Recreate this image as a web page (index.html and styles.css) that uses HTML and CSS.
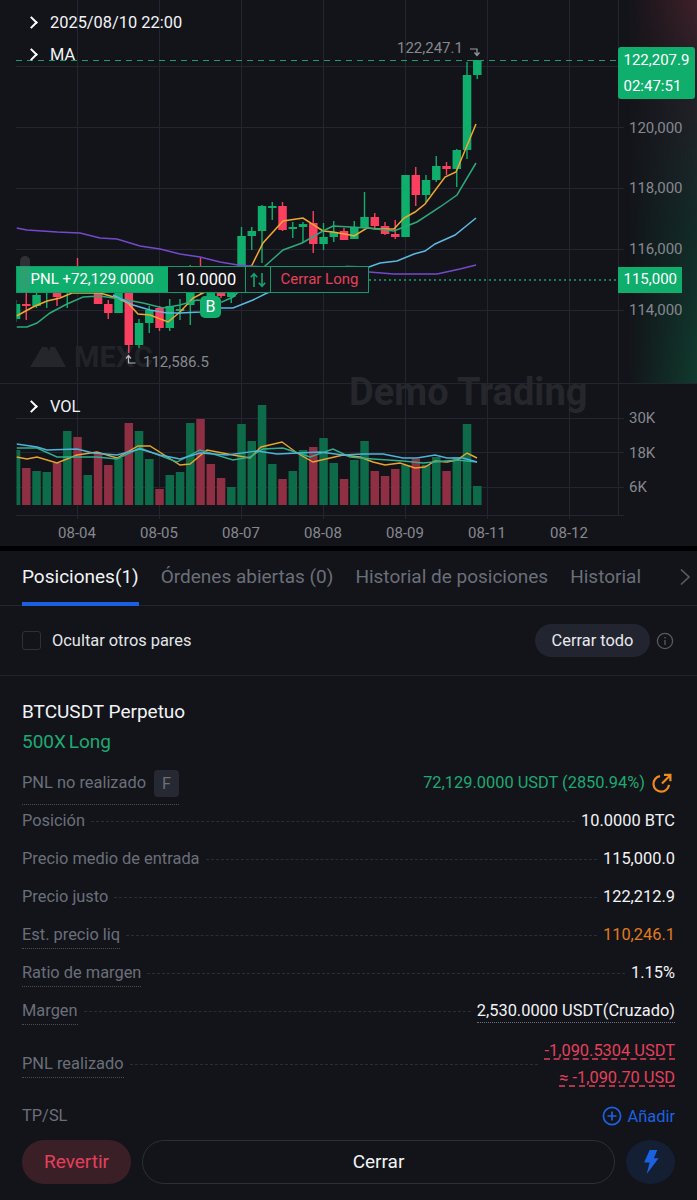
FILE: index.html
```html
<!DOCTYPE html>
<html lang="es">
<head>
    <meta charset="UTF-8">
    <meta name="viewport" content="width=device-width, initial-scale=1.0">
    <title>BTCUSDT Perpetuo</title>
    <link rel="stylesheet" href="styles.css">
</head>
<body>

    <div class="chart">
        <div class="glow"></div>
        <svg id="chartSvg" class="chart-svg" width="697" height="546" viewBox="0 0 697 546"></svg>

        <div class="legend legend-date"><span class="chev"></span>2025/08/10 22:00</div>
        <div class="legend legend-ma"><span class="chev"></span>MA</div>
        <div class="legend legend-vol"><span class="chev"></span>VOL</div>

        <div class="tag tag-last">
            <div>122,207.9</div>
            <div>02:47:51</div>
        </div>

        <div class="pnl-line">
            <div class="pnl-value">PNL +72,129.0000</div>
            <div class="pnl-qty">10.0000</div>
            <div class="pnl-flip">
                <svg width="18" height="18" viewBox="0 0 18 18" fill="none" stroke="#12a56c" stroke-width="1.6">
                    <path d="M5 16V3M1.800 6.200 5 2.600l3.200 3.600"/>
                    <path d="M13 2v13M9.800 11.800l3.200 3.600 3.200-3.600"/>
                </svg>
            </div>
            <div class="pnl-close">Cerrar Long</div>
        </div>
        <div class="handle"></div>
        <div class="tag tag-entry">115,000</div>

        <div class="marker">B</div>
    </div>

    <div class="gap"></div>

    <div class="panel">
        <div class="tabs">
            <div class="tab active">Posiciones(1)</div>
            <div class="tab">Órdenes abiertas (0)</div>
            <div class="tab">Historial de posiciones</div>
            <div class="tab">Historial</div>
            <svg class="tabs-more" width="12" height="18" viewBox="0 0 12 18" fill="none" stroke="#5a5e67" stroke-width="1.6">
                <path d="M2 1.500 10 9l-8 7.500"/>
            </svg>
        </div>

        <div class="filters">
            <div class="checkbox"></div>
            <div class="filter-label">Ocultar otros pares</div>
            <div class="close-all">Cerrar todo</div>
            <svg class="info" width="18" height="18" viewBox="0 0 18 18" fill="none" stroke="#565a63" stroke-width="1.3">
                <circle cx="9" cy="9" r="7.600"/>
                <path d="M9 8v5M9 5v1.600"/>
            </svg>
        </div>

        <div class="position">
            <div class="pos-title">BTCUSDT Perpetuo</div>
            <div class="pos-side">500X Long</div>

            <div class="row">
                <div class="label dotted label-pnl">PNL no realizado <span class="badge">F</span></div>
                <div class="spacer"></div>
                <div class="value green">72,129.0000 USDT (2850.94%)</div>
                <svg class="share" width="22" height="22" viewBox="0 0 22 22" fill="none" stroke="#f08a1d" stroke-width="2.2">
                    <path d="M9 4.200a7.800 7.800 0 1 0 9 8.600"/>
                    <path d="M11 11.500 19 3.500M13 2.800h6.400v6.400"/>
                </svg>
            </div>
            <div class="row">
                <div class="label">Posición</div>
                <div class="leader"></div>
                <div class="value">10.0000 BTC</div>
            </div>
            <div class="row">
                <div class="label">Precio medio de entrada</div>
                <div class="leader"></div>
                <div class="value">115,000.0</div>
            </div>
            <div class="row">
                <div class="label">Precio justo</div>
                <div class="leader"></div>
                <div class="value">122,212.9</div>
            </div>
            <div class="row">
                <div class="label dotted">Est. precio liq</div>
                <div class="leader"></div>
                <div class="value orange">110,246.1</div>
            </div>
            <div class="row">
                <div class="label dotted">Ratio de margen</div>
                <div class="leader"></div>
                <div class="value">1.15%</div>
            </div>
            <div class="row">
                <div class="label dotted">Margen</div>
                <div class="leader"></div>
                <div class="value value-dotted">2,530.0000 USDT(Cruzado)</div>
            </div>
            <div class="row row-tall">
                <div class="label dotted">PNL realizado</div>
                <div class="leader"></div>
                <div class="value-stack">
                    <div class="red-link">-1,090.5304 USDT</div>
                    <div class="red-link">≈ -1,090.70 USD</div>
                </div>
            </div>
            <div class="row row-tp">
                <div class="label">TP/SL</div>
                <div class="spacer"></div>
                <svg width="20" height="20" viewBox="0 0 20 20" fill="none" stroke="#1c62e0" stroke-width="1.7">
                    <circle cx="10" cy="10" r="8.600"/>
                    <path d="M10 5.500v9M5.500 10h9"/>
                </svg>
                <div class="add">Añadir</div>
            </div>
        </div>

        <div class="actions">
            <div class="btn-revert">Revertir</div>
            <div class="btn-close">Cerrar</div>
            <div class="btn-flash">
                <svg width="17" height="26" viewBox="0 0 20 30" fill="#1c62e0">
                    <path d="M9 1h9l-4 9.500h5.500L5.500 29 9 15.500H2.500z"/>
                </svg>
            </div>
        </div>
    </div>

    <script src="script.js"></script>
</body>
</html>
```

FILE: styles.css
```css
* {
    box-sizing: border-box;
}

body {
    margin: 0;
    width: 697px;
    height: 1200px;
    overflow: hidden;
    background-color: #000;
    color: #f2f3f5;
    font-family: Roboto, "Liberation Sans", sans-serif;
    font-size: 16.400px;
}

/* chart */
.chart {
    position: relative;
    height: 546px;
    background-color: #131419;
    overflow: hidden;
}
.chart-svg {
    position: absolute;
    left: 0;
    top: 0;
}
.chart-svg text {
    font-family: Roboto, "Liberation Sans", sans-serif;
}
.glow {
    position: absolute;
    right: 0;
    top: 0;
    width: 70px;
    height: 383px;
    background: linear-gradient(180deg, #3f2029 0%, #241f27 22%, #122c28 60%, #103b2e 100%);
    -webkit-mask-image: linear-gradient(90deg, transparent, #000);
    mask-image: linear-gradient(90deg, transparent, #000);
}
.legend {
    position: absolute;
    left: 28px;
    display: flex;
    align-items: center;
    height: 22px;
    color: #f2f3f5;
    font-size: 16.400px;
}
.legend-date { top: 11px; }
.legend-ma { top: 43px; }
.legend-vol { top: 395px; }
.chev {
    width: 9px;
    height: 9px;
    margin-left: -1px;
    margin-right: 14px;
    border-top: 2px solid #fff;
    border-right: 2px solid #fff;
    transform: rotate(45deg);
}
.tag {
    position: absolute;
    left: 618px;
    background-color: #0fae6c;
    color: #fff;
    padding-left: 5.500px;
    font-size: 15px;
}
.tag-last {
    top: 47px;
    width: 77px;
    height: 52px;
    border-radius: 3px;
    line-height: 26px;
}
.tag-entry {
    top: 267px;
    width: 64px;
    height: 26px;
    line-height: 25px;
}
.pnl-line {
    position: absolute;
    left: 16px;
    top: 266px;
    width: 353px;
    height: 27px;
    display: flex;
    border: 1px solid #0f9b66;
    background-color: #131419;
    font-size: 15px;
    line-height: 25px;
}
.pnl-value {
    width: 151px;
    padding-left: 13.500px;
    background-color: #0fae6c;
    color: #fff;
}
.pnl-qty {
    width: 77px;
    text-align: center;
    font-size: 16.400px;
    color: #fff;
}
.pnl-flip {
    width: 26px;
    display: flex;
    align-items: center;
    justify-content: center;
    border-left: 1px solid #0f9b66;
    border-right: 1px solid #0f9b66;
}
.pnl-close {
    flex: 1;
    text-align: center;
    color: #e5405a;
}
.handle {
    position: absolute;
    left: 20px;
    top: 256px;
    width: 10px;
    height: 36px;
    border-radius: 5px;
    background-color: rgba(120, 130, 130, 0.28);
}
.marker {
    position: absolute;
    left: 200px;
    top: 296px;
    width: 21px;
    height: 22px;
    border-radius: 5px;
    background-color: #0fae6c;
    color: #fff;
    text-align: center;
    line-height: 22px;
    font-size: 16px;
}

.gap {
    height: 5px;
}

/* bottom panel */
.panel {
    height: 649px;
    background-color: #12141a;
}
.tabs {
    display: flex;
    align-items: flex-start;
    gap: 22px;
    height: 55px;
    padding: 12px 0 0 22px;
    border-bottom: 1px solid #23262f;
    position: relative;
}
.tab {
    height: 43px;
    padding-top: 1px;
    line-height: 26px;
    font-size: 19px;
    color: #6b6f78;
    white-space: nowrap;
}
.tab.active {
    color: #f2f3f5;
    border-bottom: 4px solid #1c5fe0;
}
.tabs-more {
    position: absolute;
    right: 6px;
    top: 17px;
}
.filters {
    display: flex;
    align-items: center;
    height: 70px;
    padding: 0 23px 0 22px;
    border-bottom: 1px solid #20232b;
}
.checkbox {
    width: 19px;
    height: 19px;
    border: 1px solid #2e313a;
    border-radius: 3px;
    margin-right: 11px;
}
.filter-label {
    flex: 1;
    color: #e4e5e8;
}
.close-all {
    width: 115px;
    height: 33px;
    border-radius: 17px;
    background-color: #22252f;
    color: #e8e9ec;
    text-align: center;
    line-height: 33px;
    margin-right: 6px;
}
.position {
    padding: 21px 22px 0;
}
.pos-title {
    height: 30px;
    line-height: 30px;
    font-size: 19px;
}
.pos-side {
    height: 30px;
    line-height: 30px;
    font-size: 19px;
    word-spacing: -2px;
    color: #1fa971;
    margin-bottom: 7px;
}
.row {
    display: flex;
    align-items: center;
    height: 38px;
    white-space: nowrap;
}
.row-tall {
    height: 54px;
    margin-top: 7px;
}
.row-tp {
    margin-top: 6px;
    gap: 7px;
}
.label {
    color: #6b6f78;
    line-height: 22px;
}
.dotted {
    padding-bottom: 2px;
    border-bottom: 1px dotted #4a4d55;
    margin-top: 3px;
}
.label-pnl {
    display: flex;
    align-items: center;
    gap: 8px;
    padding-bottom: 7px;
    margin-top: 8px;
}
.badge {
    width: 25px;
    height: 27px;
    border-radius: 4px;
    background-color: #262932;
    text-align: center;
    line-height: 27px;
    color: #6b6f78;
}
.leader {
    flex: 1;
    margin: 0 6px;
    border-top: 1px dashed #2a2d35;
}
.spacer {
    flex: 1;
}
.value {
    color: #f2f3f5;
    line-height: 22px;
}
.value-dotted {
    border-bottom: 1px dotted #6b6f78;
}
.green {
    color: #1fa971;
}
.orange {
    color: #e07b1f;
}
.share {
    margin-left: 6px;
    margin-right: 2px;
}
.value-stack {
    text-align: right;
}
.red-link {
    height: 27px;
    line-height: 27px;
    color: #e5405a;
    text-decoration: underline dashed;
    text-underline-offset: 3px;
}
.add {
    color: #1c62e0;
    margin-left: -1px;
}
.actions {
    display: flex;
    gap: 11px;
    height: 44px;
    margin-top: 5px;
    padding: 0 22px;
}
.btn-revert {
    width: 109px;
    border-radius: 22px;
    background-color: #3a1f27;
    color: #e5405a;
    text-align: center;
    line-height: 44px;
    font-size: 19px;
}
.btn-close {
    flex: 1;
    border: 1px solid #2c2f38;
    border-radius: 22px;
    text-align: center;
    line-height: 42px;
    font-size: 19px;
}
.btn-flash {
    width: 49px;
    border-radius: 50%;
    background-color: #141f33;
    display: flex;
    align-items: center;
    justify-content: center;
}
```

FILE: script.js
```js
const GREEN = '#0fae6c';
const RED = '#fb3f60';
const GRID = '#23262e';
const AXIS = '#85888f';

const barX = i => 16 + 10.25 * i;

// bodyTop, bodyBottom, wickTop, wickBottom, up
const candles = [
    [304, 319, 300, 322, 1], [304, 306, 293, 320, 0], [295, 306, 290, 308, 1], [285, 293, 280, 308, 1],
    [285, 297, 280, 306, 0], [280, 292, 275, 308, 1], [270, 285, 258, 290, 0], [276, 286, 270, 290, 1],
    [285, 304, 278, 304, 0], [304, 313, 300, 319, 0], [288, 313, 282, 313, 1], [288, 345, 285, 353, 0],
    [323, 345, 319, 348, 1], [310, 323, 306, 333, 1], [308, 328, 306, 331, 0], [306, 328, 299, 331, 1],
    [309, 311, 299, 320, 1], [270, 305, 265, 325, 1], [268, 290, 258, 294, 0], [285, 298, 280, 302, 1],
    [278, 296, 274, 298, 0], [275, 297, 270, 303, 1], [236, 285, 227, 290, 1], [231, 236, 227, 250, 1],
    [206, 231, 205, 263, 1], [206, 208, 202, 220, 1], [206, 230, 202, 231, 0], [227, 229, 222, 238, 1],
    [224, 227, 222, 242, 1], [223, 244, 211, 253, 0], [237, 244, 223, 250, 1], [232, 237, 221, 242, 1],
    [231, 240, 228, 240, 0], [227, 239, 221, 239, 1], [217, 228, 192, 228, 1], [217, 226, 213, 230, 0],
    [226, 234, 222, 235, 0], [234, 237, 220, 239, 0], [175, 237, 175, 237, 1], [175, 195, 167, 206, 0],
    [180, 195, 175, 202, 1], [166, 180, 156, 182, 1], [166, 169, 162, 175, 0], [150, 169, 149, 187, 1],
    [75, 150, 62, 159, 1], [60, 75, 60, 79, 1]
];

// height, up
const volumes = [
    [55, 1], [37, 0], [34, 1], [33, 1], [42, 0], [74, 1], [68, 0], [30, 1], [52, 0], [40, 0], [47, 1], [82, 0],
    [74, 1], [46, 1], [16, 0], [30, 1], [33, 1], [82, 1], [86, 0], [41, 0], [27, 0], [18, 1], [81, 1], [64, 1],
    [100, 1], [41, 1], [26, 0], [34, 1], [55, 1], [58, 0], [67, 1], [42, 1], [26, 0], [45, 1], [64, 1], [34, 0],
    [29, 0], [36, 0], [40, 1], [46, 0], [40, 1], [48, 1], [34, 0], [48, 1], [81, 1], [19, 1]
];

const priceLines = [
    { color: '#f0a830', points: '16.500,316 33,307 47,301 60,298 72,293 100,293 117,298 128,303 138,314 150,315 168,322 180,312 193,298 203,293 230,280 252,265 263,243 283,221 303,218 323,231 333,232 350,235 354,236 367,228 380,229 394,229 404,218 415,212 425,204 445,177 456,172 476,124' },
    { color: '#2ba97b', points: '16.500,327 27,327 37,323 50,313 67,304 83,297 100,296 113,298 127,300 143,303 163,308 180,305 197,300 222,302 233,297 265,266 283,250 302,243 323,231 333,226 350,227 367,228 394,231 404,227 417,222 440,207 457,195 476,163' },
    { color: '#5bb8e0', points: '113,295 133,305 150,310 167,313 180,313 200,312 217,308 233,308 253,300 267,293 300,282 330,268 347,266.600 369,267 380,263 397,261 414,254 425,251 435,244 455,235 476,218' },
    { color: '#7449cc', points: '16.500,228 27,230 57,232 80,233 100,238 117,239 140,246 160,249 180,254 200,257 220,262 238,265 300,270 369,272 394,274 437,274 460,269 476,265' }
];

const volLines = [
    { color: '#e8a42c', points: '16.500,457 27,459 37,457 57,463 77,455 97,452 117,458 138,446 150,446 180,465 190,464 207,450 233,455 250,458 261,447 282,442 297,453 313,462 343,455 360,457 373,462 385,465 400,463 415,468 425,467 435,461 447,462 457,460 467,453 477,458' },
    { color: '#2fae8e', points: '16.500,448 37,448 57,457 97,457 117,459 140,448 177,462 200,450 233,460 250,457 263,449 283,448 310,457 333,449 350,457 373,459 403,461 423,463 457,460 477,462' },
    { color: '#4fb3d9', points: '16.500,444 37,447 47,450 77,449 93,453 117,455 140,449 160,455 180,459 200,453 227,455 257,451 277,454 320,452 343,455 363,454 383,454 403,458 417,458 435,455 447,458 463,458 477,462' }
];

const svg = document.getElementById('chartSvg');
let out = '';

function line(x1, y1, x2, y2, color, extra) {
    out += `<line x1="${x1}" y1="${y1}" x2="${x2}" y2="${y2}" stroke="${color}" ${extra || ''}/>`;
}

function label(x, y, text, color, size, anchor) {
    out += `<text x="${x}" y="${y}" fill="${color}" font-size="${size}" text-anchor="${anchor || 'start'}" dominant-baseline="central">${text}</text>`;
}

out += '<defs><clipPath id="plot"><rect x="16.500" y="0" width="602" height="546"/></clipPath></defs>';

// grid
[77.5, 159.5, 241.5, 323.5, 405.5, 487.5, 569.5].forEach(x => line(x, 0, x, 519, GRID));
[66.5, 127.5, 188.5, 249.5, 310.5, 418.5, 452.5, 487.5, 515.5].forEach(y => line(16, y, 624, y, GRID));
line(0, 383.5, 697, 383.5, GRID);
line(618.5, 0, 618.5, 515, GRID);

// watermarks
out += '<path d="M30 367 42 347h5l8 14-4 6zM50 347h5l11 20H44l4-7z" fill="#24262c"/>';
out += '<text x="74" y="367" fill="#212329" font-size="29" font-weight="700">MEXC</text>';
out += '<text x="349" y="405" fill="#25272d" font-size="38" font-weight="700">Demo Trading</text>';

// plot contents
out += '<g clip-path="url(#plot)">';

volumes.forEach((v, i) => {
    out += `<rect x="${barX(i) - 4.2}" y="${505 - v[0]}" width="8.500" height="${v[0]}" fill="${v[1] ? '#0e6b49' : '#8e2f44'}"/>`;
});
volLines.forEach(l => {
    out += `<polyline points="${l.points}" fill="none" stroke="${l.color}" stroke-width="1.400"/>`;
});

candles.forEach((c, i) => {
    const color = c[4] ? GREEN : RED;
    const x = barX(i);
    line(x, c[2], x, c[3], color, 'stroke-width="1.400"');
    out += `<rect x="${x - 4.2}" y="${c[0]}" width="8.500" height="${c[1] - c[0]}" fill="${color}"/>`;
});
priceLines.forEach(l => {
    out += `<polyline points="${l.points}" fill="none" stroke="${l.color}" stroke-width="1.500"/>`;
});

out += '</g>';

// price lines
line(16, 60.5, 618, 60.5, '#1f9c70', 'stroke-dasharray="6 5" stroke-width="1.200"');
line(369, 280, 618, 280, '#1f9c70', 'stroke-dasharray="2 3" stroke-width="1.400"');

// high / low
label(397, 48, '122,247.1', AXIS, 15);
out += '<path d="M470 49h7v5M474.500 52.500l2.500 3 2.500-3" fill="none" stroke="#9a9da3" stroke-width="1.200"/>';
label(143, 362, '112,586.5', AXIS, 15);
out += '<path d="M128.500 356v7h7M126 358.500l2.500-3 2.500 3" fill="none" stroke="#b6b8bd" stroke-width="1.200"/>';

// axis labels
[['120,000', 127.5], ['118,000', 187.5], ['116,000', 249], ['114,000', 310], ['30K', 418], ['18K', 452.5], ['6K', 487]]
    .forEach(t => label(629, t[1], t[0], AXIS, 15));
[['08-04', 77], ['08-05', 159], ['08-07', 241], ['08-08', 323], ['08-09', 405], ['08-11', 487], ['08-12', 569]]
    .forEach(t => label(t[1], 533, t[0], AXIS, 15, 'middle'));

// buy marker tip
out += '<path d="M206 297 210.500 292.500 215 297z" fill="#0fae6c"/>';

svg.innerHTML = out;
```
